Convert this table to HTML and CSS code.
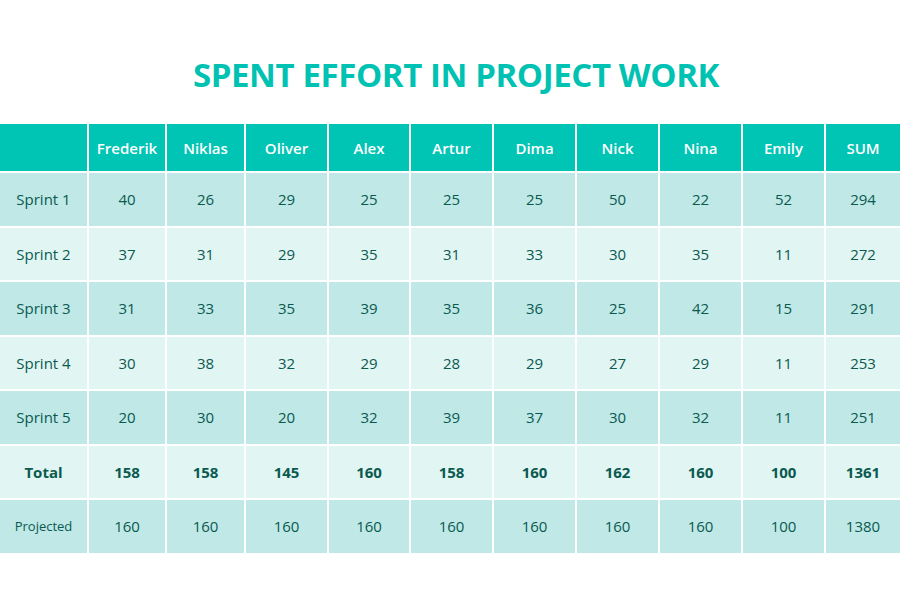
FILE: index.html
```html
<!DOCTYPE html>
<html>
<head>
<meta charset="utf-8">
<link rel="stylesheet" href="styles.css">
</head>
<body>
<div class="page">
  <h1 class="title">SPENT EFFORT IN PROJECT WORK</h1>
  <table class="effort">
    <colgroup>
      <col class="c-label"><col class="c78"><col class="c79"><col class="c83"><col class="c82"><col class="c83"><col class="c83"><col class="c83"><col class="c83"><col class="c83"><col class="c75">
    </colgroup>
    <thead>
      <tr><th></th><th>Frederik</th><th>Niklas</th><th>Oliver</th><th>Alex</th><th>Artur</th><th>Dima</th><th>Nick</th><th>Nina</th><th>Emily</th><th>SUM</th></tr>
    </thead>
    <tbody>
      <tr class="dark"><td>Sprint 1</td><td>40</td><td>26</td><td>29</td><td>25</td><td>25</td><td>25</td><td>50</td><td>22</td><td>52</td><td>294</td></tr>
      <tr class="light"><td>Sprint 2</td><td>37</td><td>31</td><td>29</td><td>35</td><td>31</td><td>33</td><td>30</td><td>35</td><td>11</td><td>272</td></tr>
      <tr class="dark"><td>Sprint 3</td><td>31</td><td>33</td><td>35</td><td>39</td><td>35</td><td>36</td><td>25</td><td>42</td><td>15</td><td>291</td></tr>
      <tr class="light"><td>Sprint 4</td><td>30</td><td>38</td><td>32</td><td>29</td><td>28</td><td>29</td><td>27</td><td>29</td><td>11</td><td>253</td></tr>
      <tr class="dark"><td>Sprint 5</td><td>20</td><td>30</td><td>20</td><td>32</td><td>39</td><td>37</td><td>30</td><td>32</td><td>11</td><td>251</td></tr>
      <tr class="light total"><td>Total</td><td>158</td><td>158</td><td>145</td><td>160</td><td>158</td><td>160</td><td>162</td><td>160</td><td>100</td><td>1361</td></tr>
      <tr class="dark projected"><td class="proj-label">Projected</td><td>160</td><td>160</td><td>160</td><td>160</td><td>160</td><td>160</td><td>160</td><td>160</td><td>100</td><td>1380</td></tr>
    </tbody>
  </table>
</div>
</body>
</html>
```
FILE: styles.css
```css
html, body {
  margin: 0;
  padding: 0;
  background: #ffffff;
}
.page {
  width: 900px;
  height: 600px;
  font-family: "Open Sans", "Liberation Sans", sans-serif;
}
.title {
  margin: 0;
  height: 124px;
  box-sizing: border-box;
  padding-top: 53px;
  padding-left: 12px;
  text-align: center;
  font-size: 33px;
  line-height: 44px;
  font-weight: 700;
  color: #00c2b2;
  letter-spacing: -0.4px;
}
.effort {
  width: 900px;
  table-layout: fixed;
  border-collapse: collapse;
}
.c-label { width: 88px; }
.c78 { width: 78px; }
.c79 { width: 79px; }
.c82 { width: 82px; }
.c83 { width: 83px; }
.c75 { width: 75px; }
.effort th, .effort td {
  padding: 0;
  text-align: center;
  border-left: 2px solid #ffffff;
  border-top: 2px solid #ffffff;
}
.effort th:first-child, .effort td:first-child {
  border-left: none;
}
.effort thead th {
  border-top: none;
  background: #00c4b4;
  color: #ffffff;
  font-weight: 600;
  font-size: 15px;
  height: 47px;
}
.effort tbody td {
  height: 52.5px;
  color: #0a5a50;
  font-size: 15px;
}
.dark td { background: #bfe8e6; }
.light td { background: #e1f5f3; }
.total td {
  font-weight: 700;
  font-size: 16px;
}
.projected td {
  font-size: 14px;
}
.projected .proj-label {
  font-size: 13px;
  font-weight: 400;
}
```
